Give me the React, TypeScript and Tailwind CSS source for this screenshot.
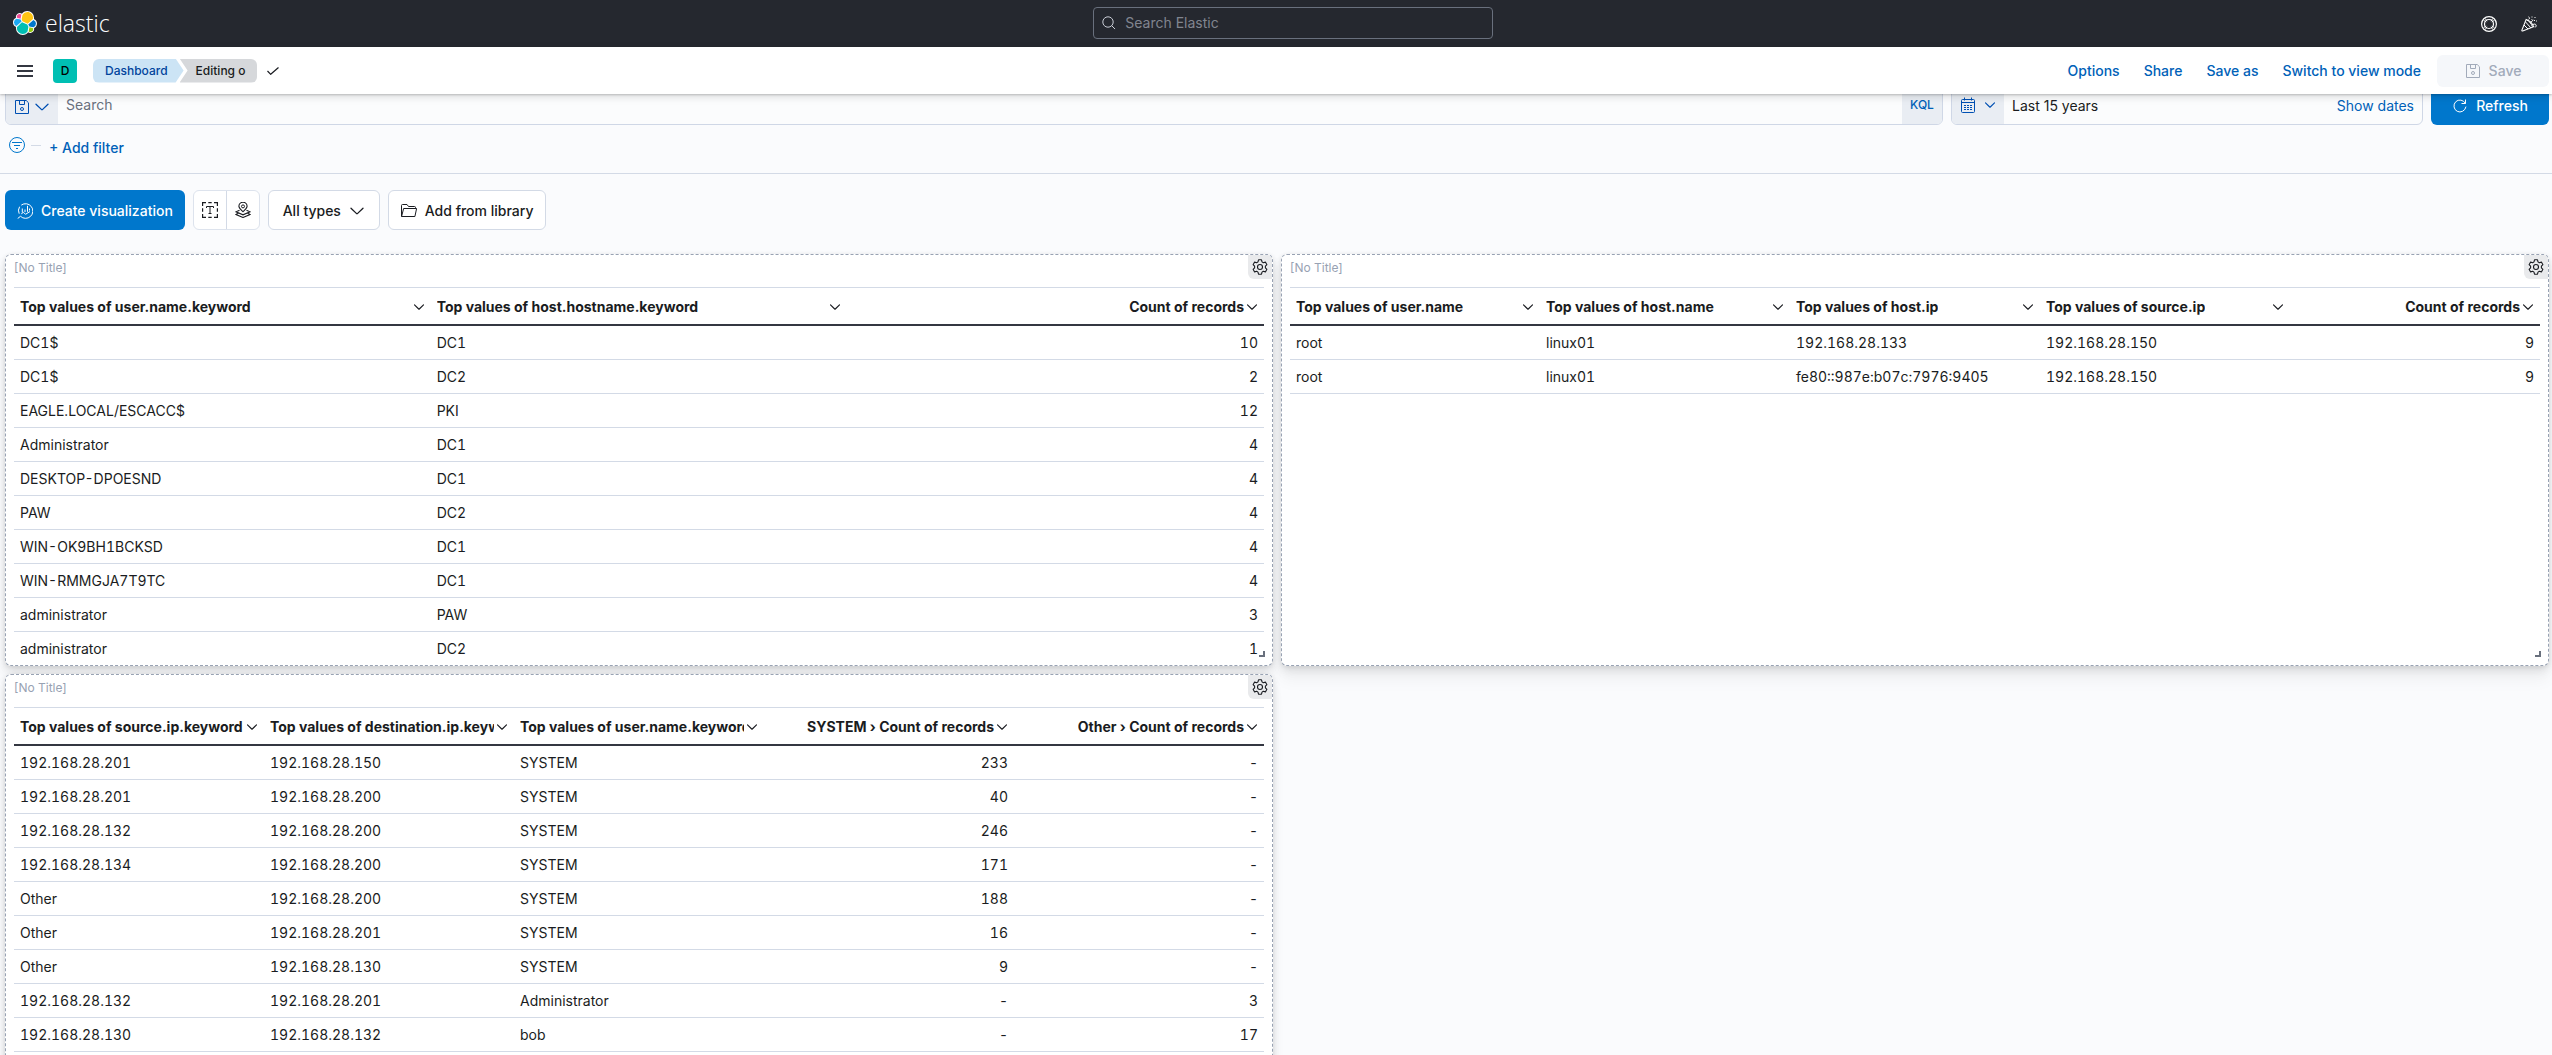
import React from 'react';
import clsx from 'clsx';

type IconProps = { className?: string };

const Svg = ({ className, children, size = 16 }: { className?: string; children: React.ReactNode; size?: number }) => (
  <svg
    width={size}
    height={size}
    viewBox="0 0 16 16"
    fill="none"
    stroke="currentColor"
    strokeWidth="1"
    className={clsx('shrink-0', className)}
    aria-hidden="true"
  >
    {children}
  </svg>
);

const ChevronDown = ({ className, size = 16 }: IconProps & { size?: number }) => (
  <Svg className={className} size={size}>
    <path d="M2 5.200l5.600 5.400a.6.6 0 00.8 0l5.600-5.400" strokeLinecap="round" strokeWidth={size < 16 ? 1.6 : 1.3} />
  </Svg>
);

const SaveIcon = ({ className }: IconProps) => (
  <Svg className={className}>
    <path d="M1.5 1.5h10.7l2.3 2.3v10.7h-13z" />
    <path d="M5.5 1.5v4h5v-4" />
    <circle cx="8" cy="10" r="1.5" />
  </Svg>
);

const SearchIcon = ({ className }: IconProps) => (
  <Svg className={className}>
    <circle cx="7" cy="7" r="5.2" />
    <path d="M10.8 10.8l3 3" strokeLinecap="round" />
  </Svg>
);

const HelpIcon = () => (
  <Svg>
    <circle cx="8" cy="8" r="7.4" strokeWidth="1.2" />
    <circle cx="8" cy="8" r="4.5" strokeWidth="1.2" />
    <path d="M2.6 4.4l2.6 1.6M4.4 2.6L6 5.2M11.6 2.6L10 5.2M13.4 4.4L10.8 6M13.4 11.6L10.8 10M11.6 13.4L10 10.8M4.4 13.4L6 10.8M2.6 11.6L5.2 10" />
  </Svg>
);

const CheerIcon = () => (
  <Svg>
    <path d="M5.2 3.4L.9 14.1c-.2.6.2 1.1.8.9l10.9-4.3c-1.200-3.400-3.800-6.100-7.400-7.300z" strokeWidth="1.100" />
    <path d="M4.400 5.800l5.400 6M3 9l4 4M5.600 3.800c2.800 1.600 4.700 3.800 5.800 6.900" />
    <path d="M7.500 3.600C8.800 2.800 8.800 1.500 7.500.8M9.400 6.800l3-3M12 8.500c1.500-1 3.400-.3 3.200 1.400-.1.900-.8 1.300-1.500 1.100" />
    <path d="M10.500 1h1M13.500 1.500h1M13 4.500h1M15 5h.9M10.500 3.500h.8" />
  </Svg>
);

const FilterIcon = ({ className }: IconProps) => (
  <Svg className={className}>
    <circle cx="8" cy="8" r="7.5" />
    <path d="M3 5.500h10M5 8.500h6M7 11.500h2" />
  </Svg>
);

const CalendarIcon = () => (
  <Svg>
    <rect x="1.500" y="2.500" width="13" height="13" rx="1" />
    <path d="M1.500 5.500h13M4.500.5v3M11.500.5v3" />
    <path d="M4 8.500h2M7 8.500h2M10 8.500h2M4 10.500h2M7 10.500h2M10 10.500h2M4 12.500h2M7 12.500h2M10 12.500h2" />
  </Svg>
);

const RefreshIcon = () => (
  <Svg>
    <path d="M13.300 5.200A6 6 0 1013.900 9" strokeLinecap="round" />
    <path d="M13.500 1.500v4h-4" />
  </Svg>
);

const LensIcon = () => (
  <Svg>
    <path d="M4.300 2.100A7.300 7.300 0 1 1 3.500 13.300L.7 15.500M2.200 10.700A7.300 7.300 0 0 1 2.600 3.700" />
    <path d="M5.300 5.500v4M8 6.500v2.500M10.500 2.800v6M12.500 5.500v2" />
    <path d="M4.300 10.800l2.200-1.500 2 2 4.500-2.800" />
  </Svg>
);

const TextIcon = () => (
  <Svg>
    <path d="M.6 4V.6H4M6.300.6h3.400M12 .6h3.400V4M15.400 6.300v3.400M15.400 12v3.400H12M9.700 15.400H6.300M4 15.400H.6V12M.6 9.700V6.300" strokeWidth="1.200" />
    <path d="M4.500 6V4.500h7V6M8 4.500v7M6.500 11.500h3" />
  </Svg>
);

const MapIcon = () => (
  <Svg>
    <path d="M8 9.700C6 7.800 3.900 6.200 3.900 4.300a4.100 4.100 0 018.200 0c0 1.900-2.100 3.500-4.100 5.400z" strokeWidth="1.100" />
    <circle cx="8" cy="4.400" r="1.500" />
    <path d="M4.500 8.200L1 9.800l7 3 7-3-3.500-1.600M3 11.200L1 12.500l7 3 7-3-2-1.300" strokeWidth="1.100" />
  </Svg>
);

const FolderIcon = () => (
  <Svg>
    <path d="M.5 13.500v-11a1 1 0 011-1H6l1.500 2h6a1 1 0 011 1v1M.6 13.500l2-8h13l-1.700 8z" />
  </Svg>
);

const GearIcon = () => (
  <Svg>
    <path
      d="M6.500.8h3l.5 2.100 1.300.8 2.100-.6 1.500 2.600-1.500 1.500v1.600l1.500 1.500-1.500 2.600-2.100-.6-1.300.8-.5 2.100h-3L6 13.100l-1.300-.8-2.100.6-1.500-2.600 1.500-1.500V7.200L1.100 5.700l1.500-2.600 2.100.6L6 2.900z"
      strokeWidth="1.100"
      strokeLinejoin="round"
    />
    <circle cx="8" cy="8" r="2.500" strokeWidth="1.100" />
  </Svg>
);

const logoPetals = [
  { fill: '#FEC514', d: 'M12.580 13.787l7.002 3.211 7.066-6.213a7.849 7.849 0 00.152-1.557c0-4.287-3.464-7.775-7.722-7.775a7.707 7.707 0 00-6.379 3.383l-1.176 6.126z' },
  { fill: '#00BFB3', d: 'M5.333 21.228c-.1.512-.153 1.034-.153 1.563 0 4.300 3.489 7.799 7.777 7.799a7.786 7.786 0 006.428-3.402l1.166-6.106-1.556-2.990-7.030-3.218z' },
  { fill: '#F04E98', d: 'M5.288 9.067l4.800 1.137 1.050-5.480a3.801 3.801 0 00-6.058 3.060c0 .431.070.870.208 1.283z' },
  { fill: '#1BA9F5', d: 'M4.872 10.214a5.273 5.273 0 00-.158 9.936l6.734-6.118-1.236-2.657z' },
  { fill: '#93C90E', d: 'M20.873 27.188a3.780 3.780 0 002.285.778 3.800 3.800 0 003.804-3.804c0-.447-.076-.880-.226-1.287l-4.795-1.126z' },
  { fill: '#0077CC', d: 'M21.848 20.563l5.280 1.239a5.293 5.293 0 003.503-4.980 5.275 5.275 0 00-3.360-4.902l-6.904 6.079z' },
];

const ElasticLogo = () => (
  <svg width="24" height="24" viewBox="0 0 32 32" className="shrink-0 overflow-visible" aria-hidden="true">
    {logoPetals.map((p) => (
      <path key={p.fill} d={p.d} fill="#fff" stroke="#fff" strokeWidth="2.600" />
    ))}
    {logoPetals.map((p) => (
      <path key={p.fill} d={p.d} fill={p.fill} />
    ))}
  </svg>
);

type Column = { name: string; numeric?: boolean };

const userHostColumns: Column[] = [
  { name: 'Top values of user.name.keyword' },
  { name: 'Top values of host.hostname.keyword' },
  { name: 'Count of records', numeric: true },
];

const userHostRows = [
  ['DC1$', 'DC1', '10'],
  ['DC1$', 'DC2', '2'],
  ['EAGLE.LOCAL/ESCACC$', 'PKI', '12'],
  ['Administrator', 'DC1', '4'],
  ['DESKTOP-DPOESND', 'DC1', '4'],
  ['PAW', 'DC2', '4'],
  ['WIN-OK9BH1BCKSD', 'DC1', '4'],
  ['WIN-RMMGJA7T9TC', 'DC1', '4'],
  ['administrator', 'PAW', '3'],
  ['administrator', 'DC2', '1'],
];

const sshColumns: Column[] = [
  { name: 'Top values of user.name' },
  { name: 'Top values of host.name' },
  { name: 'Top values of host.ip' },
  { name: 'Top values of source.ip' },
  { name: 'Count of records', numeric: true },
];

const sshRows = [
  ['root', 'linux01', '192.168.28.133', '192.168.28.150', '9'],
  ['root', 'linux01', 'fe80::987e:b07c:7976:9405', '192.168.28.150', '9'],
];

const trafficColumns: Column[] = [
  { name: 'Top values of source.ip.keyword' },
  { name: 'Top values of destination.ip.keyword' },
  { name: 'Top values of user.name.keyword' },
  { name: 'SYSTEM › Count of records', numeric: true },
  { name: 'Other › Count of records', numeric: true },
];

const trafficRows = [
  ['192.168.28.201', '192.168.28.150', 'SYSTEM', '233', '-'],
  ['192.168.28.201', '192.168.28.200', 'SYSTEM', '40', '-'],
  ['192.168.28.132', '192.168.28.200', 'SYSTEM', '246', '-'],
  ['192.168.28.134', '192.168.28.200', 'SYSTEM', '171', '-'],
  ['Other', '192.168.28.200', 'SYSTEM', '188', '-'],
  ['Other', '192.168.28.201', 'SYSTEM', '16', '-'],
  ['Other', '192.168.28.130', 'SYSTEM', '9', '-'],
  ['192.168.28.132', '192.168.28.201', 'Administrator', '-', '3'],
  ['192.168.28.130', '192.168.28.132', 'bob', '-', '17'],
];

function Panel({ columns, rows }: { columns: Column[]; rows: string[][] }) {
  return (
    <section className="relative h-[412px] rounded-md border border-dashed border-[#98a2b3] bg-white px-2 overflow-hidden shadow-[0_1px_4px_rgba(0,0,0,0.08),0_3px_8px_rgba(0,0,0,0.06),0_6px_12px_rgba(0,0,0,0.05),0_15px_15px_rgba(0,0,0,0.04)]">
      <h2 className="h-8 pt-1 text-xs leading-[18px] text-[#98a2b3]">[No Title]</h2>
      <button aria-label="Panel options" className="absolute right-0 top-0 flex h-6 w-6 items-center justify-center rounded-bl-md bg-[#e9eaec] text-[#1a1c21]">
        <GearIcon />
      </button>
      <table className="w-full table-fixed border-separate border-spacing-0 text-sm text-[#1a1c21]">
        <thead>
          <tr>
            {columns.map((col) => (
              <th key={col.name} className="h-[39px] border-t border-b-2 border-t-[#d3dae6] border-b-[#343741] px-[6px] pb-0 pt-[2px] font-bold">
                <button className={clsx('flex w-full items-center gap-[2px]', col.numeric ? 'justify-end' : 'justify-between')}>
                  <span className="overflow-hidden whitespace-nowrap">{col.name}</span>
                  <ChevronDown size={12} />
                </button>
              </th>
            ))}
          </tr>
        </thead>
        <tbody>
          {rows.map((row, i) => (
            <tr key={i}>
              {row.map((cell, j) => (
                <td
                  key={j}
                  className={clsx(
                    'h-[34px] truncate border-b border-[#d3dae6] px-[6px] py-0 tabular-nums',
                    columns[j].numeric ? 'text-right' : 'text-left'
                  )}
                >
                  {cell}
                </td>
              ))}
            </tr>
          ))}
        </tbody>
      </table>
      <span className="absolute bottom-2 right-[7px] h-[6px] w-[6px] border-b-2 border-r-2 border-[#69707d]" />
    </section>
  );
}

export default function App() {
  return (
    <div className="h-screen overflow-hidden bg-[#fafbfd] font-[Inter,'Noto_Sans',sans-serif] text-sm text-[#343741]">
      <header className="relative z-10">
        <div className="flex h-[47px] items-center justify-between bg-[#25282f] pr-[3px] text-white">
          <a href="#" className="flex items-center gap-2 pb-px pl-[13px] pr-2">
            <ElasticLogo />
            <span className="pb-px font-['Open_Sans',sans-serif] text-[23px] font-light leading-6">elastic</span>
          </a>
          <label className="-mt-px flex h-8 w-[400px] items-center gap-2 rounded border border-[#69707d] px-[7px] text-[#c9cdd6]">
            <SearchIcon />
            <input
              type="text"
              aria-label="Search Elastic"
              placeholder="Search Elastic"
              className="w-full bg-transparent text-sm outline-none placeholder:text-[#81858f]"
            />
          </label>
          <div className="flex">
            <button aria-label="Help" className="flex h-10 w-10 items-center justify-center">
              <HelpIcon />
            </button>
            <button aria-label="What's new" className="flex h-10 w-10 items-center justify-center">
              <CheerIcon />
            </button>
          </div>
        </div>

        <div className="flex h-[47px] items-center justify-between bg-white pr-[3px] pl-[17px] shadow-[0_1px_2px_rgba(0,0,0,0.2),0_3px_8px_rgba(0,0,0,0.12)]">
          <div className="flex items-center">
            <button aria-label="Toggle navigation" className="mr-5 flex w-4 flex-col gap-[3px]">
              <span className="h-[2px] bg-[#343741]" />
              <span className="h-[2px] bg-[#343741]" />
              <span className="h-[2px] bg-[#343741]" />
            </button>
            <button className="mr-4 flex h-6 w-6 items-center justify-center rounded bg-[#00bfb3] text-xs font-medium text-black">D</button>
            <nav className="flex h-6 text-xs font-medium leading-6">
              <a href="#" className="rounded-l-md bg-[#cce4f5] pl-3 pr-4 text-[#00439c] [clip-path:polygon(0_0,calc(100%-8px)_0,100%_50%,calc(100%-8px)_100%,0_100%)]">
                Dashboard
              </a>
              <span className="-ml-1 rounded-r-md bg-[#d6d8db] pl-4 pr-3 text-[#1a1c21] [clip-path:polygon(0_0,100%_0,100%_100%,0_100%,8px_50%)]">
                Editing o
              </span>
            </nav>
            <svg width="12" height="8" viewBox="0 0 12 8" fill="none" stroke="#1a1c21" strokeWidth="1.200" className="ml-[10px]" aria-hidden="true">
              <path d="M.5 4l3.200 3.300L11.500.5" />
            </svg>
          </div>
          <div className="flex items-center gap-6 font-medium text-[#0061b8]">
            <a href="#">Options</a>
            <a href="#">Share</a>
            <a href="#">Save as</a>
            <a href="#">Switch to view mode</a>
            <button disabled className="-ml-2 flex h-8 w-28 items-center justify-center gap-2 rounded-md bg-[#f5f7fa] text-[#a2abba]">
              <SaveIcon />
              Save
            </button>
          </div>
        </div>
      </header>

      <main className="-mt-[9px]">
        <div className="border-b border-[#d3dae6] pl-[5px] pr-[3px]">
          <div className="flex h-10 gap-2">
            <div className="flex flex-1 overflow-hidden rounded-md border border-[#cfd7e6] bg-[#fbfcfd]">
              <button aria-label="Saved queries" className="flex w-[52px] items-center justify-center gap-1 bg-[#e9edf3] pt-1 text-[#0050b3]">
                <SaveIcon />
                <ChevronDown />
              </button>
              <input
                type="text"
                aria-label="Search"
                placeholder="Search"
                className="flex-1 bg-transparent px-2 text-sm outline-none placeholder:text-[#69707d]"
              />
              <button className="w-10 bg-[#e9edf3] text-xs font-medium text-[#0061b8]">KQL</button>
            </div>
            <div className="flex w-[472px] overflow-hidden rounded-md border border-[#cfd7e6] bg-[#fbfcfd]">
              <button aria-label="Date quick select" className="flex w-[52px] items-center justify-center gap-2 bg-[#e9edf3] text-[#0050b3]">
                <CalendarIcon />
                <ChevronDown size={12} />
              </button>
              <button className="flex flex-1 items-center justify-between px-2 pt-[2px] text-[#1a1c21]">
                Last 15 years
                <span className="text-[#0061b8]">Show dates</span>
              </button>
            </div>
            <button className="flex w-[118px] items-center justify-center gap-2 rounded-md bg-[#0077cc] pt-[2px] font-medium text-white">
              <RefreshIcon />
              Refresh
            </button>
          </div>
          <div className="flex h-12 items-center pl-1">
            <button aria-label="Filter options" className="-mt-2 text-[#0077cc]">
              <FilterIcon />
            </button>
            <span className="-mt-2 ml-[6px] mr-2 h-px w-[10px] bg-[#d3dae6]" />
            <button className="pb-[2px] font-medium text-[#0061b8]">+ Add filter</button>
          </div>
        </div>

        <div className="pl-[5px] pr-[3px] pt-4">
          <div className="flex h-10 gap-2 font-medium text-[#1a1c21]">
            <button className="flex items-center gap-2 rounded-md bg-[#0077cc] px-3 pt-px text-white">
              <LensIcon />
              Create visualization
            </button>
            <div className="flex w-[67px] divide-x divide-[#d3dae6] overflow-hidden rounded-md border border-[#dde3ed] bg-white">
              <button aria-label="Add text" className="flex flex-1 items-center justify-center">
                <TextIcon />
              </button>
              <button aria-label="Add map" className="flex flex-1 items-center justify-center">
                <MapIcon />
              </button>
            </div>
            <button className="flex w-28 items-center justify-center gap-2 rounded-md border border-[#d3dae6] bg-white pt-px">
              All types
              <ChevronDown />
            </button>
            <button className="flex items-center gap-2 rounded-md border border-[#d3dae6] bg-white px-3 pt-px">
              <FolderIcon />
              Add from library
            </button>
          </div>

          <div className="mt-6 grid grid-cols-2 gap-2">
            <Panel columns={userHostColumns} rows={userHostRows} />
            <Panel columns={sshColumns} rows={sshRows} />
            <Panel columns={trafficColumns} rows={trafficRows} />
          </div>
        </div>
      </main>
    </div>
  );
}
